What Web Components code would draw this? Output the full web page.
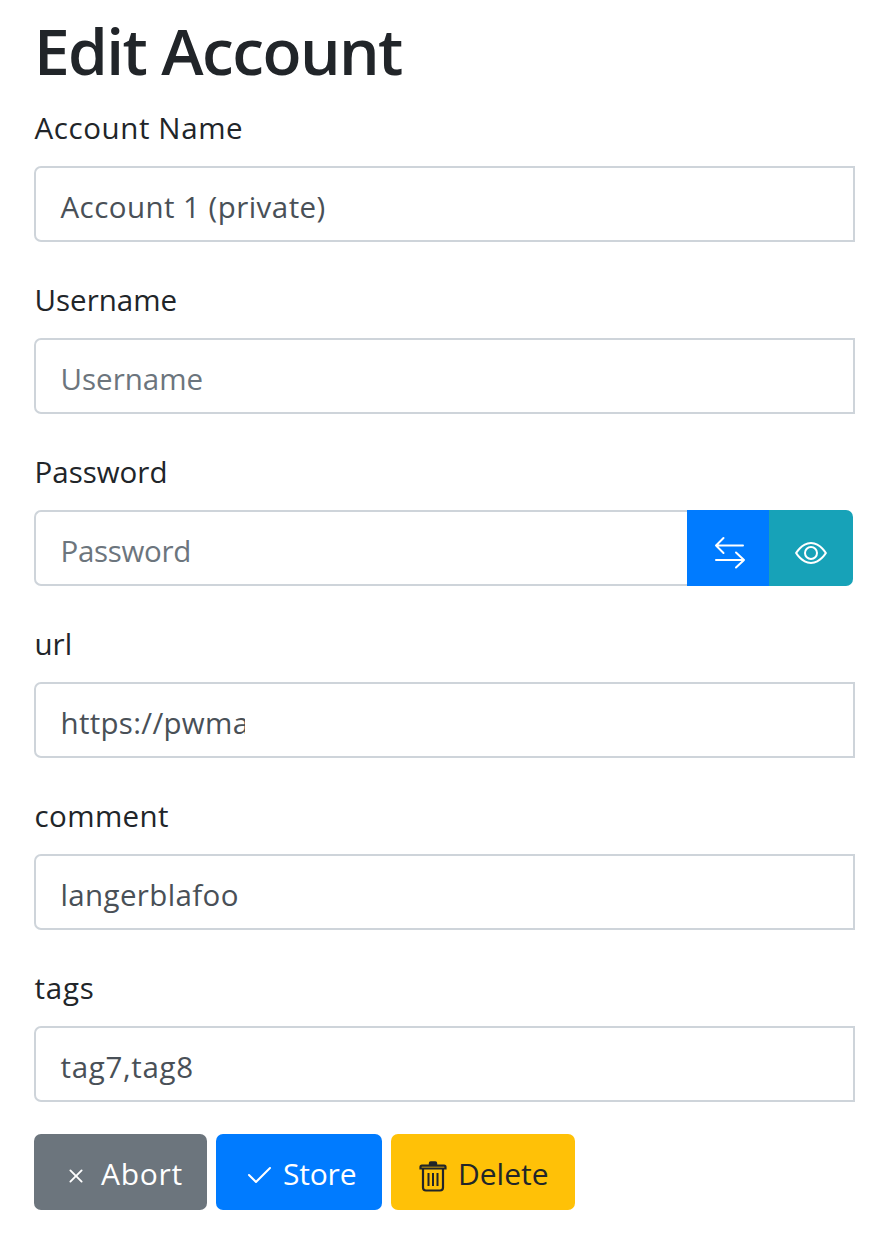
<!DOCTYPE html>
<html><head><meta charset="utf-8"><style>
html,body{margin:0;padding:0;background:#fff}
body{font-family:"Open Sans","Noto Sans",sans-serif;color:#212529;height:1250px;overflow:hidden}
</style></head><body>
<edit-page>
<form-field label="Account Name" ls=".6" vs=".45" value="Account 1 (private)"></form-field>
<form-field label="Username" ls="0" vs="0" placeholder="Username"></form-field>
<form-field label="Password" ls="0" vs="-.3" placeholder="Password" group></form-field>
<form-field label="url" ls="0" vs=".3" value="https://pwmanager.example" clip></form-field>
<form-field label="comment" ls=".4" vs=".37" value="langerblafoo"></form-field>
<form-field label="tags" ls=".75" vs=".66" value="tag7,tag8"></form-field>
<div slot="actions" style="display:flex;gap:9px">
<action-btn kind="abort">Abort</action-btn>
<action-btn kind="store">Store</action-btn>
<action-btn kind="delete">Delete</action-btn>
</div>
</edit-page>
<script>
class EditPage extends HTMLElement{constructor(){super();this.attachShadow({mode:'open'}).innerHTML=`<style>
:host{display:block;padding:0 28px 0 34px}
h1{margin:0 0 17px;font:600 64px/76px "Open Sans",sans-serif;letter-spacing:-1.6px;padding:13px 0 0;height:76px;color:#212529}
.a{margin-top:-4px}
</style><h1>Edit Account</h1><slot></slot><div class="a"><slot name="actions"></slot></div>`}}
customElements.define('edit-page',EditPage);
class FormField extends HTMLElement{connectedCallback(){
const l=this.getAttribute('label'),v=this.getAttribute('value'),p=this.getAttribute('placeholder');
const g=this.hasAttribute('group'),c=this.hasAttribute('clip');
this.attachShadow({mode:'open'}).innerHTML=`<style>
:host{display:block;height:172px;box-sizing:border-box}
label{display:block;font-size:29.5px;line-height:44px;height:60px;padding-left:.5px;letter-spacing:${this.getAttribute('ls')}px;color:#212529}
.row{display:flex;height:76px}
.row.g{margin-right:2px}
.box{flex:1;min-width:0;box-sizing:border-box;border:2px solid #ced4da;border-radius:7px 0 0 7px;padding:0 24.5px;font-size:29.5px;line-height:78px;color:#495057;letter-spacing:${this.getAttribute('vs')}px;background:#fff;white-space:nowrap;overflow:hidden}
.g .box{border-right:0}
.box.ph{color:#6c757d}
.clip{display:block;width:184.5px;overflow:hidden}
.b{width:82px;display:flex;align-items:center;justify-content:center;background:#007bff}
.b.e{background:#17a2b8;width:84px;border-radius:0 7px 7px 0}
svg{display:block;margin-top:10px}
.swap{margin-left:4px}
</style><label>${l}</label><div class="row ${g?'g':''}"><div class="box ${p?'ph':''}">${c?`<span class="clip">${v}</span>`:(v||p)}</div>${g?`<div class="b"><svg class="swap" width="32" height="36" viewBox="0 0 32 36" fill="none" stroke="#fff" stroke-width="2" stroke-linecap="round" stroke-linejoin="round"><path d="M2 10.500H29M9.500 3 2 10.500 9.500 18M2 25H30M22 17.500 30 25 22 32.500"/></svg></div><div class="b e"><svg width="32" height="32" viewBox="0 0 16 16" fill="#fff"><path fill-rule="evenodd" d="M16 8s-3-5.500-8-5.500S0 8 0 8s3 5.500 8 5.500S16 8 16 8zM1.173 8a13.133 13.133 0 0 1 1.660-2.043C4.120 4.668 5.880 3.500 8 3.500c2.120 0 3.879 1.168 5.168 2.457A13.133 13.133 0 0 1 14.828 8c-.058.087-.122.183-.195.288-.335.480-.830 1.120-1.465 1.755C11.879 11.332 10.119 12.500 8 12.500c-2.120 0-3.879-1.168-5.168-2.457A13.134 13.134 0 0 1 1.172 8z"/><path fill-rule="evenodd" d="M8 5.500a2.500 2.500 0 1 0 0 5 2.500 2.500 0 0 0 0-5zM4.500 8a3.500 3.500 0 1 1 7 0 3.500 3.500 0 0 1-7 0z"/></svg></div>`:''}</div>`}}
customElements.define('form-field',FormField);
const icons={
abort:'<svg width="30" height="30" viewBox="0 0 16 16" fill="currentColor"><path fill-rule="evenodd" d="M4.646 4.646a.5.5 0 0 1 .708 0L8 7.293l2.646-2.647a.5.5 0 0 1 .708.708L8.707 8l2.647 2.646a.5.5 0 0 1-.708.708L8 8.707l-2.646 2.647a.5.5 0 0 1-.708-.708L7.293 8 4.646 5.354a.5.5 0 0 1 0-.708z"/></svg>',
store:'<svg width="32" height="32" viewBox="0 0 16 16" fill="currentColor"><path fill-rule="evenodd" d="M13.854 3.646a.5.5 0 0 1 0 .708l-7 7a.5.5 0 0 1-.708 0l-3.500-3.500a.5.5 0 1 1 .708-.708L6.500 10.293l6.646-6.647a.5.5 0 0 1 .708 0z"/></svg>',
delete:'<svg width="30" height="32" viewBox="0 0 30 32" fill="none" stroke="currentColor" stroke-width="2.200"><path d="M2.500 8.500V7c0-.8.6-1.400 1.400-1.400h22.200c.8 0 1.400.6 1.400 1.400v1.500z"/><path d="M11.500 5V3.200c0-.7.5-1.200 1.200-1.200h4.600c.7 0 1.200.5 1.200 1.200V5" fill="currentColor" stroke-width="1.400"/><path d="M5 9v18.500c0 1.700 1.300 3 3 3h14c1.700 0 3-1.300 3-3V9"/><path d="M10.500 13v13M15 13v13M19.500 13v13" stroke-width="2"/></svg>'};
class ActionBtn extends HTMLElement{connectedCallback(){const k=this.getAttribute('kind');
const w={abort:173,store:166,delete:184}[k],bg={abort:'#6c757d',store:'#007bff',delete:'#ffc107'}[k],c=k=='delete'?'#212529':'#fff',gap={abort:10,store:8,delete:10}[k],pl={abort:27,store:27,delete:27}[k],ls={abort:.7,store:-.2,delete:0}[k];
this.attachShadow({mode:'open'}).innerHTML=`<style>
:host{display:block;box-sizing:border-box;width:${w}px;height:76px;border-radius:7px;background:${bg};color:${c};font-size:30px;letter-spacing:${ls}px}
.i{display:flex;align-items:center;height:76px;padding-left:${pl}px;box-sizing:border-box;gap:${gap}px}
svg{display:block;flex:none;margin-top:8px}
span{padding-top:3px}
</style><div class="i">${icons[k]}<span><slot></slot></span></div>`}}
customElements.define('action-btn',ActionBtn);
</script>
</body></html>
